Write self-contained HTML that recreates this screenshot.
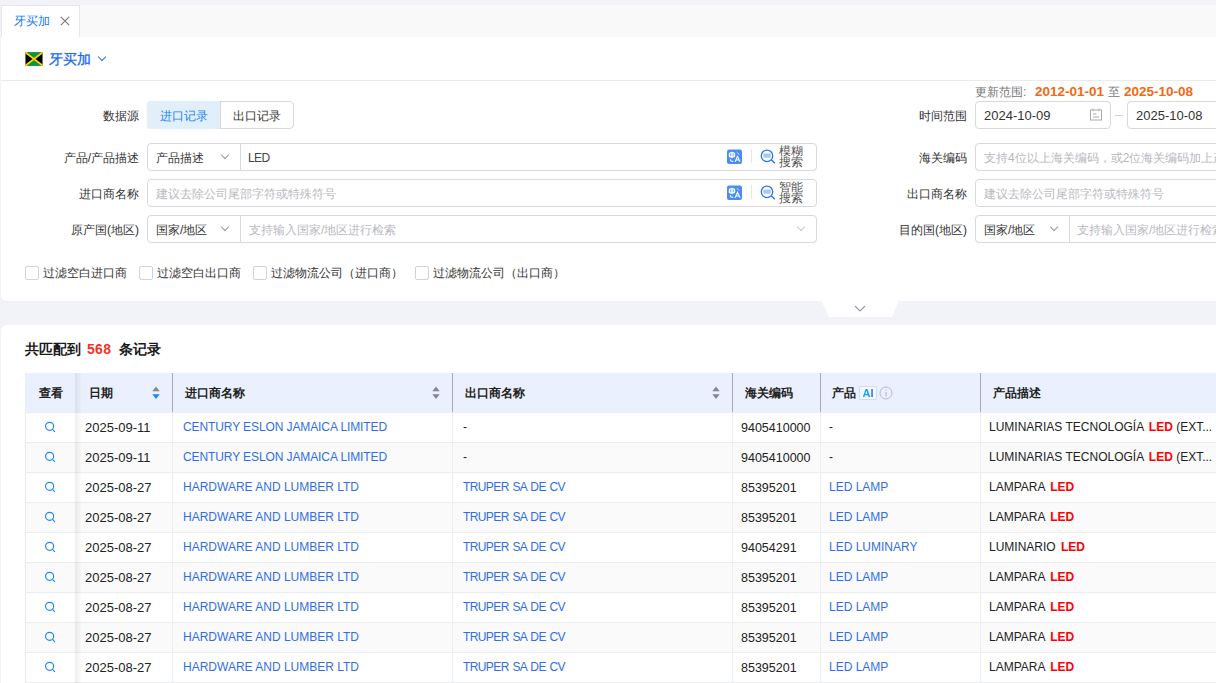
<!DOCTYPE html>
<html><head><meta charset="utf-8">
<style>
*{box-sizing:border-box;margin:0;padding:0}
html,body{width:1216px;height:683px;overflow:hidden}
body{background:#f2f3f8;font-family:"Liberation Sans",sans-serif;font-size:12px;color:#333;position:relative}
.a{position:absolute;white-space:nowrap}
.tabbar{left:1px;top:5px;width:1215px;height:32px;background:#f9f9fa}
.tab{left:1px;top:5px;width:79px;height:33px;background:#fff;border:1px solid #e6e6e6;border-bottom:none}
.p1{left:1px;top:37px;width:1240px;height:264px;background:#fff;border-radius:0 0 6px 6px}
.p2{left:1px;top:325px;width:1240px;height:358px;background:#fff;border-radius:6px 6px 0 0}
.lbl{font-size:12px;color:#333;line-height:28px;text-align:right;margin-top:1px}
.inp{height:28px;border:1px solid #d9d9db;border-radius:4px;background:#fff}
.ph{color:#b8b8c0;font-size:12px;line-height:26px;margin-top:1px}
.val{color:#333;font-size:12px;line-height:26px;margin-top:1px}
.v13{font-size:13px}
.chev{width:8px;height:8px;border-right:1px solid #999;border-bottom:1px solid #999;transform:rotate(45deg)}
.cb{width:14px;height:14px;border:1px solid #d0d3da;border-radius:2px;background:#fff}
.cbt{font-size:12px;color:#333;line-height:14px}

.th{top:373px;height:40px;background:#eaf0fd;border-bottom:1px solid #ebedf0}
.row{left:25px;width:1191px;height:30px;border-bottom:1px solid #ebedf0}
.c{font-size:12px;line-height:29px;color:#222}
.lk{color:#2f6fe6}
.red{color:#f00;font-weight:bold;margin-left:2px}
.hb{top:373px;width:1px;height:39px;background:#a8abb3}
.vb{width:1px;height:30px;background:#ebedf0}
.hc{top:374px;line-height:39px;font-size:12px;font-weight:bold;color:#222}
.ai{width:18px;height:14px;border:1px solid #cddcfa;border-radius:1px;background:#f4f8ff;font-weight:bold;font-size:11px;line-height:13px;text-align:center}
.aig{background:linear-gradient(100deg,#1ab8f0,#1a66f5);-webkit-background-clip:text;background-clip:text;color:transparent}
.shd{width:7px;background:linear-gradient(to right,rgba(0,0,30,0.07),rgba(0,0,30,0))}
.dt{font-size:13px}
.cd{font-size:12.5px;margin-top:1px}
.tr{letter-spacing:-0.6px;word-spacing:1px}
.ce{letter-spacing:-0.1px}
</style></head><body>

<!-- tab bar -->
<div class="a tabbar"></div>
<div class="a tab"></div>
<div class="a" style="left:14px;top:13px;font-size:12px;color:#1677ff;line-height:16px">牙买加</div>
<svg class="a" style="left:60px;top:16px" width="10" height="10" viewBox="0 0 10 10"><path d="M0.8 0.8L9.2 9.2M9.2 0.8L0.8 9.2" stroke="#7a7a7a" stroke-width="1.15"/></svg>

<!-- panel 1 -->
<div class="a p1"></div>
<svg class="a" style="left:25px;top:52px" width="18" height="14" viewBox="0 0 18 14">
<rect x="0" y="0" width="18" height="14" fill="#e8e8ee"/>
<rect x="0.5" y="0.5" width="17" height="13" fill="#000"/>
<path d="M0.5 0.5H17.5L9 7Z" fill="#009b3a"/><path d="M0.5 13.5H17.5L9 7Z" fill="#009b3a"/>
<path d="M0.5 0.5L17.5 13.5M17.5 0.5L0.5 13.5" stroke="#fed100" stroke-width="1.8"/>
</svg>
<div class="a" style="left:49px;top:50px;font-size:14px;color:#1f6cf0;line-height:18px;-webkit-text-stroke:0.35px #1f6cf0">牙买加</div>
<div class="a chev" style="left:99px;top:54px;width:6px;height:6px;border-color:#2c6fee"></div>
<div class="a" style="left:1px;top:80px;width:1215px;height:1px;background:#ebebeb"></div>

<!-- update range -->
<div class="a" style="left:975px;top:84px;line-height:16px;font-size:12px;color:#777">更新范围</div>
<div class="a" style="left:1023px;top:84px;line-height:16px;font-size:12px;color:#777">:</div>
<div class="a" style="left:1035px;top:84px;line-height:16px;font-size:13.5px;font-weight:bold;color:#f06a10">2012-01-01</div>
<div class="a" style="left:1108px;top:84px;line-height:16px;font-size:12px;color:#777">至</div>
<div class="a" style="left:1124px;top:84px;line-height:16px;font-size:13.5px;font-weight:bold;color:#f06a10">2025-10-08</div>

<!-- row 1 -->
<div class="a lbl" style="left:60px;width:79px;top:101px">数据源</div>
<div class="a" style="left:147px;top:101px;width:147px;height:28px;border:1px solid #d9d9db;border-radius:4px;background:#fff"></div>
<div class="a" style="left:147px;top:101px;width:74px;height:28px;background:#e1effb;border-radius:4px 0 0 4px"></div>
<div class="a" style="left:220px;top:101px;width:1px;height:28px;background:#d9d9db"></div>
<div class="a" style="left:160px;top:102px;line-height:28px;color:#1a86f5">进口记录</div>
<div class="a" style="left:233px;top:102px;line-height:28px;color:#333">出口记录</div>

<div class="a lbl" style="left:880px;width:87px;top:101px">时间范围</div>
<div class="a inp" style="left:975px;top:101px;width:136px"></div>
<div class="a val v13" style="left:984px;top:102px">2024-10-09</div>
<svg class="a" style="left:1089px;top:108px" width="14" height="13" viewBox="0 0 14 13"><rect x="1.5" y="2" width="11" height="10" fill="none" stroke="#aaa"/><path d="M4 0.5V3M10 0.5V3M4 6H7.5M4 9H10" stroke="#aaa"/></svg>
<div class="a" style="left:1115px;top:115px;width:8px;height:1px;background:#d0d0d0"></div>
<div class="a inp" style="left:1127px;top:101px;width:136px"></div>
<div class="a val v13" style="left:1136px;top:102px">2025-10-08</div>

<!-- row 2 -->
<div class="a lbl" style="left:40px;width:99px;top:143px">产品/产品描述</div>
<div class="a inp" style="left:147px;top:143px;width:670px"></div>
<div class="a" style="left:240px;top:144px;width:1px;height:26px;background:#d9d9db"></div>
<div class="a val" style="left:156px;top:144px">产品描述</div>
<div class="a chev" style="left:222px;top:152px;width:6px;height:6px"></div>
<div class="a val" style="left:248px;top:144px;letter-spacing:-0.6px;color:#444">LED</div>

<div class="a lbl" style="left:880px;width:87px;top:143px">海关编码</div>
<div class="a inp" style="left:975px;top:143px;width:300px"></div>
<div class="a ph" style="left:984px;top:144px">支持4位以上海关编码，或2位海关编码加上产品描述</div>

<!-- row 3 -->
<div class="a lbl" style="left:40px;width:99px;top:179px">进口商名称</div>
<div class="a inp" style="left:147px;top:179px;width:670px"></div>
<div class="a ph" style="left:156px;top:180px">建议去除公司尾部字符或特殊符号</div>

<div class="a lbl" style="left:880px;width:87px;top:179px">出口商名称</div>
<div class="a inp" style="left:975px;top:179px;width:300px"></div>
<div class="a ph" style="left:984px;top:180px">建议去除公司尾部字符或特殊符号</div>

<svg class="a" style="left:727px;top:149px" width="16" height="16" viewBox="0 0 16 16"><rect x="0" y="0.5" width="15" height="14.5" rx="2" fill="#4a8cf0"/>
<rect x="2.3" y="3.7" width="5.4" height="4.2" rx="1.2" fill="#9cc0f7" stroke="#fff" stroke-width="1.1"/>
<path d="M5 2.8V9.2" stroke="#fff" stroke-width="1.1"/>
<path d="M9.8 3.4L12.6 5.6" stroke="#fff" stroke-width="1" stroke-dasharray="1.2 0.8"/>
<path d="M3.4 10.2Q3.3 12.4 6.2 12.4" fill="none" stroke="#fff" stroke-width="1.1"/>
<path d="M8.1 12.8L10.5 7.3L13 12.8M8.9 11H12.2" fill="none" stroke="#fff" stroke-width="1.1"/></svg>
<div class="a" style="left:751px;top:149px;width:1px;height:14px;background:#e6e6e6"></div>
<svg class="a" style="left:760px;top:149px" width="17" height="16" viewBox="0 0 17 16"><rect x="3.2" y="4.6" width="7.6" height="4.2" rx="1" fill="#a8c8f8"/><circle cx="7" cy="6.8" r="5.75" fill="none" stroke="#2a73e8" stroke-width="1.3"/><path d="M11.3 10.8L14.8 14.2" stroke="#2a73e8" stroke-width="1.4"/></svg>
<div class="a" style="left:779px;top:146px;font-size:12px;line-height:11px;color:#555;white-space:normal;width:26px">模糊<br>搜索</div>
<svg class="a" style="left:727px;top:185px" width="16" height="16" viewBox="0 0 16 16"><rect x="0" y="0.5" width="15" height="14.5" rx="2" fill="#4a8cf0"/>
<rect x="2.3" y="3.7" width="5.4" height="4.2" rx="1.2" fill="#9cc0f7" stroke="#fff" stroke-width="1.1"/>
<path d="M5 2.8V9.2" stroke="#fff" stroke-width="1.1"/>
<path d="M9.8 3.4L12.6 5.6" stroke="#fff" stroke-width="1" stroke-dasharray="1.2 0.8"/>
<path d="M3.4 10.2Q3.3 12.4 6.2 12.4" fill="none" stroke="#fff" stroke-width="1.1"/>
<path d="M8.1 12.8L10.5 7.3L13 12.8M8.9 11H12.2" fill="none" stroke="#fff" stroke-width="1.1"/></svg>
<div class="a" style="left:751px;top:185px;width:1px;height:14px;background:#e6e6e6"></div>
<svg class="a" style="left:760px;top:185px" width="17" height="16" viewBox="0 0 17 16"><rect x="3.2" y="4.6" width="7.6" height="4.2" rx="1" fill="#a8c8f8"/><circle cx="7" cy="6.8" r="5.75" fill="none" stroke="#2a73e8" stroke-width="1.3"/><path d="M11.3 10.8L14.8 14.2" stroke="#2a73e8" stroke-width="1.4"/></svg>
<div class="a" style="left:779px;top:182px;font-size:12px;line-height:11px;color:#555;white-space:normal;width:26px">智能<br>搜索</div>
<!-- row 4 -->
<div class="a lbl" style="left:40px;width:99px;top:215px">原产国(地区)</div>
<div class="a inp" style="left:147px;top:215px;width:670px"></div>
<div class="a" style="left:240px;top:216px;width:1px;height:26px;background:#d9d9db"></div>
<div class="a val" style="left:156px;top:216px">国家/地区</div>
<div class="a chev" style="left:222px;top:224px;width:6px;height:6px"></div>
<div class="a ph" style="left:249px;top:216px">支持输入国家/地区进行检索</div>
<div class="a chev" style="left:798px;top:224px;width:6px;height:6px;border-color:#c8c8c8"></div>

<div class="a lbl" style="left:880px;width:87px;top:215px">目的国(地区)</div>
<div class="a inp" style="left:975px;top:215px;width:300px"></div>
<div class="a" style="left:1069px;top:216px;width:1px;height:26px;background:#d9d9db"></div>
<div class="a val" style="left:984px;top:216px">国家/地区</div>
<div class="a chev" style="left:1051px;top:224px;width:6px;height:6px"></div>
<div class="a ph" style="left:1077px;top:216px">支持输入国家/地区进行检索</div>

<!-- checkboxes -->
<div class="a cb" style="left:25px;top:266px"></div><div class="a cbt" style="left:43px;top:266px">过滤空白进口商</div>
<div class="a cb" style="left:139px;top:266px"></div><div class="a cbt" style="left:157px;top:266px">过滤空白出口商</div>
<div class="a cb" style="left:253px;top:266px"></div><div class="a cbt" style="left:271px;top:266px">过滤物流公司（进口商）</div>
<div class="a cb" style="left:415px;top:266px"></div><div class="a cbt" style="left:433px;top:266px">过滤物流公司（出口商）</div>

<!-- collapse tab -->
<svg class="a" style="left:820px;top:300px" width="80" height="18" viewBox="0 0 80 18"><path d="M1 0H79L72 17H9Z" fill="#fff"/><path d="M35 6L40 11L45 6" fill="none" stroke="#9898ac" stroke-width="1.15"/></svg>

<!-- panel 2 -->
<div class="a p2"></div>
<!-- table -->
<div class="a" style="left:25px;top:339px;line-height:20px;font-size:14px;font-weight:bold;color:#1a1a1a">共匹配到</div>
<div class="a" style="left:87px;top:339px;line-height:20px;font-size:14px;font-weight:bold;color:#f0352a;letter-spacing:0.3px">568</div>
<div class="a" style="left:119px;top:339px;line-height:20px;font-size:14px;font-weight:bold;color:#1a1a1a">条记录</div>
<div class="a th" style="left:25px;width:1191px"></div>
<div class="a hb" style="left:172px"></div>
<div class="a hb" style="left:452px"></div>
<div class="a hb" style="left:732px"></div>
<div class="a hb" style="left:820px"></div>
<div class="a hb" style="left:980px"></div>
<div class="a hc" style="left:39px">查看</div>
<div class="a hc" style="left:89px">日期</div>
<div class="a hc" style="left:185px">进口商名称</div>
<div class="a hc" style="left:465px">出口商名称</div>
<div class="a hc" style="left:745px">海关编码</div>
<div class="a hc" style="left:832px">产品</div>
<div class="a ai" style="left:859px;top:386px"><span class="aig">AI</span></div>
<svg class="a" style="left:879px;top:386px" width="14" height="14" viewBox="0 0 14 14"><circle cx="7" cy="7" r="6" fill="none" stroke="#b8bcc4" stroke-width="1"/><path d="M7 6V10.5M7 3.6V4.8" stroke="#b8bcc4" stroke-width="1.1"/></svg>
<div class="a hc" style="left:993px">产品描述</div>

<svg class="a" style="left:152px;top:386px" width="8" height="13" viewBox="0 0 8 13"><path d="M0.3 5.3L4 0.5L7.7 5.3Z" fill="#85868f"/><path d="M0.3 8.2L4 13L7.7 8.2Z" fill="#1a87f5"/></svg>
<svg class="a" style="left:432px;top:386px" width="8" height="13" viewBox="0 0 8 13"><path d="M0.3 5.3L4 0.5L7.7 5.3Z" fill="#85868f"/><path d="M0.3 8.2L4 13L7.7 8.2Z" fill="#85868f"/></svg>
<svg class="a" style="left:712px;top:386px" width="8" height="13" viewBox="0 0 8 13"><path d="M0.3 5.3L4 0.5L7.7 5.3Z" fill="#85868f"/><path d="M0.3 8.2L4 13L7.7 8.2Z" fill="#85868f"/></svg>
<div class="a row" style="top:413px;background:#fff"></div>
<div class="a vb" style="left:172px;top:413px"></div>
<div class="a vb" style="left:452px;top:413px"></div>
<div class="a vb" style="left:732px;top:413px"></div>
<div class="a vb" style="left:820px;top:413px"></div>
<div class="a vb" style="left:980px;top:413px"></div>
<svg class="a" style="left:44px;top:421px" width="12" height="12" viewBox="0 0 12 12"><circle cx="5.6" cy="5.35" r="4.05" fill="none" stroke="#1a87f5" stroke-width="1.15"/><path d="M8.5 8.3L10.9 10.8" stroke="#1a87f5" stroke-width="1.2"/></svg>
<div class="a c dt" style="left:85px;top:413px">2025-09-11</div>
<div class="a c lk ce" style="left:183px;top:413px">CENTURY ESLON JAMAICA LIMITED</div>
<div class="a c" style="left:463px;top:413px">-</div>
<div class="a c cd" style="left:741px;top:413px">9405410000</div>
<div class="a c" style="left:829px;top:413px">-</div>
<div class="a c" style="left:989px;top:413px">LUMINARIAS TECNOLOGÍA <span class="red">LED</span> (EXT...</div>
<div class="a row" style="top:443px;background:#fafafa"></div>
<div class="a vb" style="left:172px;top:443px"></div>
<div class="a vb" style="left:452px;top:443px"></div>
<div class="a vb" style="left:732px;top:443px"></div>
<div class="a vb" style="left:820px;top:443px"></div>
<div class="a vb" style="left:980px;top:443px"></div>
<svg class="a" style="left:44px;top:451px" width="12" height="12" viewBox="0 0 12 12"><circle cx="5.6" cy="5.35" r="4.05" fill="none" stroke="#1a87f5" stroke-width="1.15"/><path d="M8.5 8.3L10.9 10.8" stroke="#1a87f5" stroke-width="1.2"/></svg>
<div class="a c dt" style="left:85px;top:443px">2025-09-11</div>
<div class="a c lk ce" style="left:183px;top:443px">CENTURY ESLON JAMAICA LIMITED</div>
<div class="a c" style="left:463px;top:443px">-</div>
<div class="a c cd" style="left:741px;top:443px">9405410000</div>
<div class="a c" style="left:829px;top:443px">-</div>
<div class="a c" style="left:989px;top:443px">LUMINARIAS TECNOLOGÍA <span class="red">LED</span> (EXT...</div>
<div class="a row" style="top:473px;background:#fff"></div>
<div class="a vb" style="left:172px;top:473px"></div>
<div class="a vb" style="left:452px;top:473px"></div>
<div class="a vb" style="left:732px;top:473px"></div>
<div class="a vb" style="left:820px;top:473px"></div>
<div class="a vb" style="left:980px;top:473px"></div>
<svg class="a" style="left:44px;top:481px" width="12" height="12" viewBox="0 0 12 12"><circle cx="5.6" cy="5.35" r="4.05" fill="none" stroke="#1a87f5" stroke-width="1.15"/><path d="M8.5 8.3L10.9 10.8" stroke="#1a87f5" stroke-width="1.2"/></svg>
<div class="a c dt" style="left:85px;top:473px">2025-08-27</div>
<div class="a c lk " style="left:183px;top:473px">HARDWARE AND LUMBER LTD</div>
<div class="a c lk tr" style="left:463px;top:473px">TRUPER SA DE CV</div>
<div class="a c cd" style="left:741px;top:473px">85395201</div>
<div class="a c lk" style="left:829px;top:473px">LED LAMP</div>
<div class="a c" style="left:989px;top:473px">LAMPARA <span class="red">LED</span></div>
<div class="a row" style="top:503px;background:#fafafa"></div>
<div class="a vb" style="left:172px;top:503px"></div>
<div class="a vb" style="left:452px;top:503px"></div>
<div class="a vb" style="left:732px;top:503px"></div>
<div class="a vb" style="left:820px;top:503px"></div>
<div class="a vb" style="left:980px;top:503px"></div>
<svg class="a" style="left:44px;top:511px" width="12" height="12" viewBox="0 0 12 12"><circle cx="5.6" cy="5.35" r="4.05" fill="none" stroke="#1a87f5" stroke-width="1.15"/><path d="M8.5 8.3L10.9 10.8" stroke="#1a87f5" stroke-width="1.2"/></svg>
<div class="a c dt" style="left:85px;top:503px">2025-08-27</div>
<div class="a c lk " style="left:183px;top:503px">HARDWARE AND LUMBER LTD</div>
<div class="a c lk tr" style="left:463px;top:503px">TRUPER SA DE CV</div>
<div class="a c cd" style="left:741px;top:503px">85395201</div>
<div class="a c lk" style="left:829px;top:503px">LED LAMP</div>
<div class="a c" style="left:989px;top:503px">LAMPARA <span class="red">LED</span></div>
<div class="a row" style="top:533px;background:#fff"></div>
<div class="a vb" style="left:172px;top:533px"></div>
<div class="a vb" style="left:452px;top:533px"></div>
<div class="a vb" style="left:732px;top:533px"></div>
<div class="a vb" style="left:820px;top:533px"></div>
<div class="a vb" style="left:980px;top:533px"></div>
<svg class="a" style="left:44px;top:541px" width="12" height="12" viewBox="0 0 12 12"><circle cx="5.6" cy="5.35" r="4.05" fill="none" stroke="#1a87f5" stroke-width="1.15"/><path d="M8.5 8.3L10.9 10.8" stroke="#1a87f5" stroke-width="1.2"/></svg>
<div class="a c dt" style="left:85px;top:533px">2025-08-27</div>
<div class="a c lk " style="left:183px;top:533px">HARDWARE AND LUMBER LTD</div>
<div class="a c lk tr" style="left:463px;top:533px">TRUPER SA DE CV</div>
<div class="a c cd" style="left:741px;top:533px">94054291</div>
<div class="a c lk" style="left:829px;top:533px">LED LUMINARY</div>
<div class="a c" style="left:989px;top:533px">LUMINARIO <span class="red">LED</span></div>
<div class="a row" style="top:563px;background:#fafafa"></div>
<div class="a vb" style="left:172px;top:563px"></div>
<div class="a vb" style="left:452px;top:563px"></div>
<div class="a vb" style="left:732px;top:563px"></div>
<div class="a vb" style="left:820px;top:563px"></div>
<div class="a vb" style="left:980px;top:563px"></div>
<svg class="a" style="left:44px;top:571px" width="12" height="12" viewBox="0 0 12 12"><circle cx="5.6" cy="5.35" r="4.05" fill="none" stroke="#1a87f5" stroke-width="1.15"/><path d="M8.5 8.3L10.9 10.8" stroke="#1a87f5" stroke-width="1.2"/></svg>
<div class="a c dt" style="left:85px;top:563px">2025-08-27</div>
<div class="a c lk " style="left:183px;top:563px">HARDWARE AND LUMBER LTD</div>
<div class="a c lk tr" style="left:463px;top:563px">TRUPER SA DE CV</div>
<div class="a c cd" style="left:741px;top:563px">85395201</div>
<div class="a c lk" style="left:829px;top:563px">LED LAMP</div>
<div class="a c" style="left:989px;top:563px">LAMPARA <span class="red">LED</span></div>
<div class="a row" style="top:593px;background:#fff"></div>
<div class="a vb" style="left:172px;top:593px"></div>
<div class="a vb" style="left:452px;top:593px"></div>
<div class="a vb" style="left:732px;top:593px"></div>
<div class="a vb" style="left:820px;top:593px"></div>
<div class="a vb" style="left:980px;top:593px"></div>
<svg class="a" style="left:44px;top:601px" width="12" height="12" viewBox="0 0 12 12"><circle cx="5.6" cy="5.35" r="4.05" fill="none" stroke="#1a87f5" stroke-width="1.15"/><path d="M8.5 8.3L10.9 10.8" stroke="#1a87f5" stroke-width="1.2"/></svg>
<div class="a c dt" style="left:85px;top:593px">2025-08-27</div>
<div class="a c lk " style="left:183px;top:593px">HARDWARE AND LUMBER LTD</div>
<div class="a c lk tr" style="left:463px;top:593px">TRUPER SA DE CV</div>
<div class="a c cd" style="left:741px;top:593px">85395201</div>
<div class="a c lk" style="left:829px;top:593px">LED LAMP</div>
<div class="a c" style="left:989px;top:593px">LAMPARA <span class="red">LED</span></div>
<div class="a row" style="top:623px;background:#fafafa"></div>
<div class="a vb" style="left:172px;top:623px"></div>
<div class="a vb" style="left:452px;top:623px"></div>
<div class="a vb" style="left:732px;top:623px"></div>
<div class="a vb" style="left:820px;top:623px"></div>
<div class="a vb" style="left:980px;top:623px"></div>
<svg class="a" style="left:44px;top:631px" width="12" height="12" viewBox="0 0 12 12"><circle cx="5.6" cy="5.35" r="4.05" fill="none" stroke="#1a87f5" stroke-width="1.15"/><path d="M8.5 8.3L10.9 10.8" stroke="#1a87f5" stroke-width="1.2"/></svg>
<div class="a c dt" style="left:85px;top:623px">2025-08-27</div>
<div class="a c lk " style="left:183px;top:623px">HARDWARE AND LUMBER LTD</div>
<div class="a c lk tr" style="left:463px;top:623px">TRUPER SA DE CV</div>
<div class="a c cd" style="left:741px;top:623px">85395201</div>
<div class="a c lk" style="left:829px;top:623px">LED LAMP</div>
<div class="a c" style="left:989px;top:623px">LAMPARA <span class="red">LED</span></div>
<div class="a row" style="top:653px;background:#fff"></div>
<div class="a vb" style="left:172px;top:653px"></div>
<div class="a vb" style="left:452px;top:653px"></div>
<div class="a vb" style="left:732px;top:653px"></div>
<div class="a vb" style="left:820px;top:653px"></div>
<div class="a vb" style="left:980px;top:653px"></div>
<svg class="a" style="left:44px;top:661px" width="12" height="12" viewBox="0 0 12 12"><circle cx="5.6" cy="5.35" r="4.05" fill="none" stroke="#1a87f5" stroke-width="1.15"/><path d="M8.5 8.3L10.9 10.8" stroke="#1a87f5" stroke-width="1.2"/></svg>
<div class="a c dt" style="left:85px;top:653px">2025-08-27</div>
<div class="a c lk " style="left:183px;top:653px">HARDWARE AND LUMBER LTD</div>
<div class="a c lk tr" style="left:463px;top:653px">TRUPER SA DE CV</div>
<div class="a c cd" style="left:741px;top:653px">85395201</div>
<div class="a c lk" style="left:829px;top:653px">LED LAMP</div>
<div class="a c" style="left:989px;top:653px">LAMPARA <span class="red">LED</span></div>
<div class="a" style="left:25px;top:413px;width:1px;height:270px;background:#e6e8ed"></div>
<div class="a shd" style="left:75px;top:373px;height:310px"></div>
</body></html>
